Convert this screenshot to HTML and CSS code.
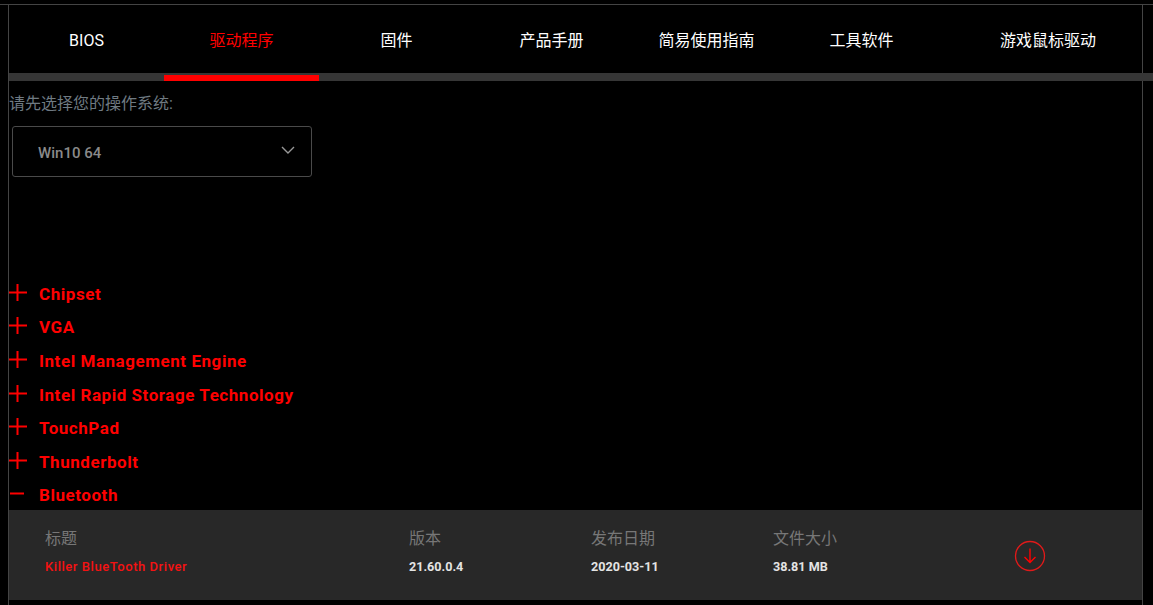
FILE: index.html
```html
<!DOCTYPE html>
<html lang="zh">
<head>
<meta charset="utf-8">
<title>驱动程序</title>
<link rel="stylesheet" href="styles.css">
</head>
<body>
<main class="frame">
  <nav class="tabs">
    <a class="tab">BIOS</a>
    <a class="tab active">驱动程序</a>
    <a class="tab">固件</a>
    <a class="tab">产品手册</a>
    <a class="tab">简易使用指南</a>
    <a class="tab">工具软件</a>
    <a class="tab last">游戏鼠标驱动</a>
  </nav>
  <section class="os">
    <label class="os-label">请先选择您的操作系统:</label>
    <div class="select">
      <span>Win10 64</span>
      <svg class="chevron" width="14" height="8" viewBox="0 0 14 8"><path d="M1 1l6 6 6-6" fill="none" stroke="#999" stroke-width="1.4"/></svg>
    </div>
  </section>
  <section class="list">
    <div class="row"><svg class="sign" width="20" height="20" viewBox="0 0 20 20"><path d="M1 9.5h18M9.5 1v17" stroke="#f00" stroke-width="2"/></svg><span>Chipset</span></div>
    <div class="row"><svg class="sign" width="20" height="20" viewBox="0 0 20 20"><path d="M1 9.5h18M9.5 1v17" stroke="#f00" stroke-width="2"/></svg><span>VGA</span></div>
    <div class="row"><svg class="sign" width="20" height="20" viewBox="0 0 20 20"><path d="M1 9.5h18M9.5 1v17" stroke="#f00" stroke-width="2"/></svg><span>Intel Management Engine</span></div>
    <div class="row"><svg class="sign" width="20" height="20" viewBox="0 0 20 20"><path d="M1 9.5h18M9.5 1v17" stroke="#f00" stroke-width="2"/></svg><span>Intel Rapid Storage Technology</span></div>
    <div class="row"><svg class="sign" width="20" height="20" viewBox="0 0 20 20"><path d="M1 9.5h18M9.5 1v17" stroke="#f00" stroke-width="2"/></svg><span>TouchPad</span></div>
    <div class="row"><svg class="sign" width="20" height="20" viewBox="0 0 20 20"><path d="M1 9.5h18M9.5 1v17" stroke="#f00" stroke-width="2"/></svg><span>Thunderbolt</span></div>
    <div class="row"><svg class="sign" width="20" height="20" viewBox="0 0 20 20"><path d="M2 9.5h14" stroke="#f00" stroke-width="2"/></svg><span>Bluetooth</span></div>
  </section>
  <section class="panel">
    <div class="cell">
      <div class="head">标题</div>
      <div class="title">Killer BlueTooth Driver</div>
    </div>
    <div class="cell">
      <div class="head">版本</div>
      <div class="value">21.60.0.4</div>
    </div>
    <div class="cell">
      <div class="head">发布日期</div>
      <div class="value">2020-03-11</div>
    </div>
    <div class="cell">
      <div class="head">文件大小</div>
      <div class="value">38.81 MB</div>
    </div>
    <div class="dl">
      <svg width="32" height="32" viewBox="0 0 32 32"><circle cx="16" cy="16" r="14.5" fill="none" stroke="#e01a1a" stroke-width="1.3"/><path d="M16 8.5v14M10.5 17l5.5 5.5 5.5-5.5" fill="none" stroke="#f00" stroke-width="1.4"/></svg>
    </div>
  </section>
</main>
</body>
</html>
```
FILE: styles.css
```css
* { box-sizing: border-box; }
html, body { margin: 0; background: #000; overflow: hidden; }
body {
  height: 605px;
  margin-top: 4px;
  border-top: 1px solid #444;
  font-family: Roboto, "Noto Sans CJK SC", sans-serif;
  color: #fff;
}
.frame {
  margin-left: 8px;
  width: 1135px;
  height: 600px;
  border-left: 1px solid #444;
  border-right: 1px solid #444;
}
.tabs {
  display: flex;
  height: 76px;
  margin-right: -11px;
  border-bottom: 8px solid #363636;
}
.tab {
  flex: 0 0 155px;
  height: 70px;
  line-height: 72px;
  text-align: center;
  font-size: 16px;
  color: #fff;
  position: relative;
}
.tab.active { color: #f00; }
.tab.active::after {
  content: "";
  position: absolute;
  left: 0;
  right: 0;
  top: 70px;
  height: 6px;
  background: #f00;
}
.tab.last { flex: 1 1 auto; padding-left: 4px; }
.os { padding: 13px 0 0; }
.os-label {
  display: block;
  font-size: 16px;
  line-height: 20px;
  color: #6f7a82;
}
.select {
  display: flex;
  align-items: center;
  justify-content: space-between;
  width: 300px;
  height: 51px;
  margin: 12px 0 0 3px;
  padding: 2px 16px 0 25px;
  border: 1px solid #4a4a4a;
  border-radius: 3px;
  font-size: 15px;
  font-weight: 500;
  color: #8a8a8a;
}
.chevron { margin-top: -5px; }
.list { margin-top: 100px; }
.row {
  display: flex;
  align-items: center;
  height: 33.6px;
  font-size: 17px;
  font-weight: 700;
  letter-spacing: 0.55px;
  color: #f00;
}
.sign { flex: none; margin: -2px 11px 0 -1px; }
.panel {
  display: grid;
  grid-template-columns: 364px 182px 182px 241px 64px;
  align-items: start;
  height: 90px;
  margin-top: -2px;
  padding: 19px 0 0 36px;
  background: #282828;
}
.head {
  font-size: 16px;
  line-height: 20px;
  color: #777;
}
.title, .value {
  margin-top: 10px;
  font-size: 13px;
  line-height: 16px;
}
.title { color: #f41212; font-weight: 500; letter-spacing: 0.55px; }
.value { color: #e4e4e4; font-size: 12.6px; font-weight: 700; }
.dl { padding-top: 11px; }
.dl svg { display: block; }
```
